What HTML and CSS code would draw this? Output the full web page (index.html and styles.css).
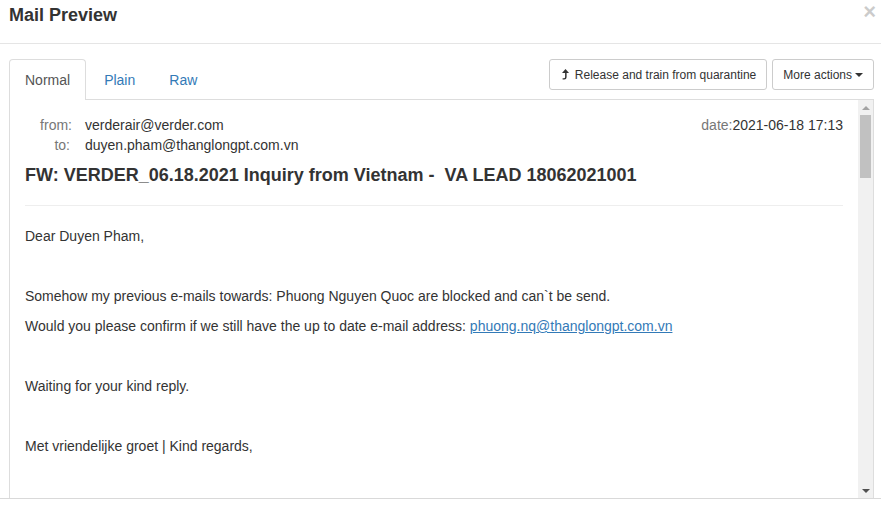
FILE: index.html
```html
<!DOCTYPE html>
<html>
<head>
<meta charset="utf-8">
<title>Mail Preview</title>
<link rel="stylesheet" href="styles.css">
</head>
<body>
<div class="modal">
  <div class="modal-header">
    <h4 class="modal-title">Mail Preview</h4>
    <span class="close">×</span>
  </div>
  <div class="modal-body">
    <div class="toolbar">
      <ul class="nav-tabs">
        <li class="tab active">Normal</li>
        <li class="tab">Plain</li>
        <li class="tab">Raw</li>
      </ul>
      <div class="actions">
        <button class="btn btn-release"><svg class="icon" width="12" height="11" viewBox="0 0 12 11"><path d="M5.5 0 L9 4 L6.6 4 L6.6 8.2 Q6.6 10.6 4.2 10.6 L2.6 10.6 L2.6 9.2 L4 9.2 Q5.1 9.2 5.1 8 L5.1 4 L2 4 Z" fill="#333"/></svg> Release and train from quarantine</button>
        <button class="btn">More actions <span class="caret"></span></button>
      </div>
    </div>
    <div class="frame">
      <div class="mail">
        <div class="meta">
          <div class="addr">
            <span class="label">from:</span><span class="value">verderair@verder.com</span>
            <span class="label label-to">to:</span><span class="value">duyen.pham@thanglongpt.com.vn</span>
          </div>
          <div class="date"><span class="label">date:</span>2021-06-18 17:13</div>
        </div>
        <h4 class="subject">FW: VERDER_06.18.2021 Inquiry from Vietnam - &nbsp;VA LEAD 18062021001</h4>
        <hr class="sep">
        <p>Dear Duyen Pham,</p>
        <p>&nbsp;</p>
        <p>Somehow my previous e-mails towards: Phuong Nguyen Quoc are blocked and can`t be send.</p>
        <p>Would you please confirm if we still have the up to date e-mail address: <a href="#">phuong.nq@thanglongpt.com.vn</a></p>
        <p>&nbsp;</p>
        <p>Waiting for your kind reply.</p>
        <p>&nbsp;</p>
        <p>Met vriendelijke groet | Kind regards,</p>
      </div>
      <div class="scrollbar">
        <div class="sb-btn"><span class="arrow-up"></span></div>
        <div class="sb-track"><div class="sb-thumb"></div></div>
        <div class="sb-btn"><span class="arrow-down"></span></div>
      </div>
    </div>
  </div>
  <div class="modal-footer"></div>
</div>
</body>
</html>
```

FILE: styles.css
```css
* { box-sizing: border-box; }
html, body {
  margin: 0;
  padding: 0;
  background: #fff;
}
body {
  width: 881px;
  height: 506px;
  overflow: hidden;
  font-family: "Liberation Sans", Arial, sans-serif;
  font-size: 14px;
  line-height: 20px;
  color: #333;
}
.modal-header {
  height: 44px;
  padding: 5px 5px 0 9px;
  border-bottom: 1px solid #e5e5e5;
  display: flex;
  justify-content: space-between;
  align-items: flex-start;
}
.modal-title {
  margin: 0;
  font-size: 18px;
  font-weight: bold;
  line-height: 20px;
  color: #333;
}
.close {
  font-size: 22px;
  font-weight: bold;
  line-height: 14px;
  color: #000;
  opacity: 0.2;
}
.modal-body {
  padding: 15px 7px 0 9px;
}
.toolbar {
  display: flex;
  justify-content: space-between;
  align-items: flex-start;
  border-bottom: 1px solid #ddd;
  height: 41px;
}
.nav-tabs {
  list-style: none;
  margin: 0;
  padding: 0;
  display: flex;
}
.tab {
  padding: 10px 15px 10px;
  line-height: 20px;
  margin-right: 2px;
  border: 1px solid transparent;
  border-bottom: none;
  border-radius: 4px 4px 0 0;
  color: #337ab7;
  height: 41px;
}
.tab.active {
  color: #555;
  background: #fff;
  border-color: #ddd;
  height: 41px;
}
.actions {
  display: flex;
  gap: 5px;
}
.btn {
  font-family: "Liberation Sans", Arial, sans-serif;
  font-size: 12px;
  line-height: 18px;
  padding: 5px 10px;
  height: 31px;
  color: #333;
  background: #fff;
  border: 1px solid #ccc;
  border-radius: 3px;
  display: flex;
  align-items: center;
  gap: 3px;
}
.icon {
  display: block;
  margin-top: -1px;
}
.caret {
  display: inline-block;
  width: 0;
  height: 0;
  border-top: 4px solid #333;
  border-left: 4px solid transparent;
  border-right: 4px solid transparent;
  margin-left: 0;
  margin-top: 1px;
}
.frame {
  display: flex;
  height: 398px;
  border-left: 1px solid #ddd;
  border-right: 1px solid #ddd;
}
.mail {
  flex: 1;
  padding: 15px 15px 0;
  overflow: hidden;
}
.meta {
  display: flex;
  justify-content: space-between;
}
.addr {
  display: grid;
  grid-template-columns: 47px auto;
  column-gap: 13px;
}
.label {
  color: #777;
  text-align: right;
}
.label-to {
  padding-right: 2px;
}
.subject {
  margin: 10px 0 20px;
  font-size: 18px;
  font-weight: bold;
  line-height: 20px;
  color: #333;
}
.sep {
  margin: 0 0 20px;
  border: 0;
  border-top: 1px solid #eee;
  height: 0;
}
p {
  margin: 0 0 10px;
}
a {
  color: #337ab7;
  text-decoration: underline;
}
.scrollbar {
  width: 15px;
  background: #f1f1f1;
  display: flex;
  flex-direction: column;
}
.sb-btn {
  height: 15px;
  display: flex;
  align-items: center;
  justify-content: center;
}
.sb-track {
  flex: 1;
  padding: 0 2px;
}
.sb-thumb {
  height: 63px;
  background: #c1c1c1;
}
.arrow-up {
  width: 0;
  height: 0;
  border-bottom: 4px solid #a3a3a3;
  border-left: 4px solid transparent;
  border-right: 4px solid transparent;
}
.arrow-down {
  width: 0;
  height: 0;
  border-top: 4px solid #505050;
  border-left: 4px solid transparent;
  border-right: 4px solid transparent;
}
.modal-footer {
  border-top: 1px solid #d9d9d9;
  height: 8px;
}
```
